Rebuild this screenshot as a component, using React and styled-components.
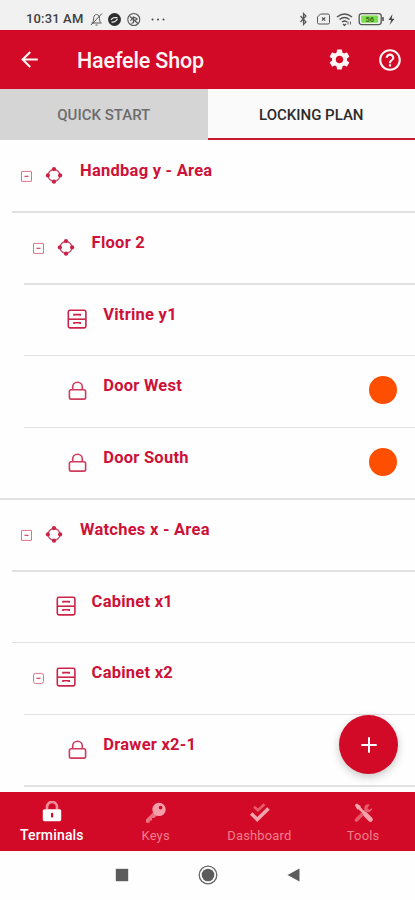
import React from "react";
import styled, { createGlobalStyle } from "styled-components";
import { MdArrowBack, MdSettings, MdHelpOutline } from "react-icons/md";

const ROWS = [
	{ label: "Handbag y - Area", icon: "area", level: 0, open: true, inset: 12 },
	{ label: "Floor 2", icon: "area", level: 1, open: true, inset: 24 },
	{ label: "Vitrine y1", icon: "drawer", level: 2, inset: 24 },
	{ label: "Door West", icon: "lock", level: 2, inset: 24, alert: true },
	{ label: "Door South", icon: "lock", level: 2, inset: 0, alert: true },
	{ label: "Watches x - Area", icon: "area", level: 0, open: true, inset: 12 },
	{ label: "Cabinet x1", icon: "drawer", level: 1, inset: 12 },
	{ label: "Cabinet x2", icon: "drawer", level: 1, open: true, round: true, inset: 24 },
	{ label: "Drawer x2-1", icon: "lock", level: 2, inset: 24 },
];

export default function App() {
	return (
		<Screen>
			<GlobalStyle />
			<StatusBar>
				<Clock>10:31 AM</Clock>
				<StatusLeft />
				<StatusRight />
			</StatusBar>
			<Header>
				<MdArrowBack size={25} />
				<Title>Haefele Shop</Title>
				<MdSettings size={25} />
				<HelpIcon size={26} />
			</Header>
			<Tabs>
				<Tab>QUICK START</Tab>
				<Tab $active>LOCKING PLAN</Tab>
			</Tabs>
			<List>
				{ROWS.map((row) => (
					<Row key={row.label} $level={row.level}>
						<Toggle>{row.open && <ToggleIcon round={row.round} />}</Toggle>
						<IconSlot>{ICONS[row.icon]}</IconSlot>
						<RowLabel>{row.label}</RowLabel>
						{row.alert && <Dot />}
						<Divider $inset={row.inset} />
					</Row>
				))}
				<Fab aria-label="Add">
					<svg width="16" height="16" viewBox="0 0 16 16">
						<path d="M8 0.3v15.4M0.3 8h15.4" stroke="#fff" strokeWidth="2" />
					</svg>
				</Fab>
			</List>
			<BottomNav>
				<NavItem $active>
					<LockSolid />
					<NavLabel $active>Terminals</NavLabel>
				</NavItem>
				<NavItem>
					<KeyIcon />
					<NavLabel>Keys</NavLabel>
				</NavItem>
				<NavItem>
					<DoubleCheck />
					<NavLabel>Dashboard</NavLabel>
				</NavItem>
				<NavItem>
					<ToolsIcon />
					<NavLabel>Tools</NavLabel>
				</NavItem>
			</BottomNav>
			<SystemNav>
				<svg width="14" height="14" viewBox="0 0 14 14">
					<rect x="0.8" y="0.8" width="12.4" height="12.4" fill="#5c5c5c" />
				</svg>
				<svg width="20" height="20" viewBox="0 0 20 20">
					<circle cx="10" cy="10" r="8.8" fill="none" stroke="#686868" strokeWidth="1.3" />
					<circle cx="10" cy="10" r="6.3" fill="#5c5c5c" />
				</svg>
				<svg width="14" height="14" viewBox="0 0 14 14">
					<path d="M0.5 7L12.5 0.4v13.2z" fill="#5c5c5c" />
				</svg>
			</SystemNav>
		</Screen>
	);
}

function StatusLeft() {
	return (
		<svg width="78" height="16" viewBox="0 0 78 16" fill="none" stroke="#555">
			{/* muted bell */}
			<path d="M1.500 12h10M2.500 11.500c1.200-1.200 1-3 1.200-5C4 4.500 5 3.800 6.500 3.500c2 .3 3 1.500 3 4 0 2 .2 3 1.300 4M5.500 14h2M1 14L12 2.500" />
			<circle cx="24.500" cy="8.500" r="6.500" fill="#2e2e2e" stroke="none" />
			<path d="M21 9c2-3 3.500-2.500 6.500-2.200M21.500 11c2 .5 4 0 6-3" stroke="#eee" strokeWidth="1.200" />
			<circle cx="43.800" cy="8.500" r="6" strokeWidth="1.100" />
			<path d="M40 5.500l8 7M40.500 10l3-4 4 2M43.500 6.500v5l-2 1M45 9l2.500-.5" strokeWidth="1.200" />
			<g fill="#444" stroke="none">
				<circle cx="62.500" cy="8.500" r="1" />
				<circle cx="68" cy="8.500" r="1" />
				<circle cx="73.500" cy="8.500" r="1" />
			</g>
		</svg>
	);
}

function StatusRight() {
	return (
		<RightIcons width="100" height="16" viewBox="0 0 100 16" fill="none" stroke="#555">
			<path d="M1.500 5l5.500 6L4.500 13.500V2.500L7 5l-5.500 6" strokeWidth="1.200" />
			{/* missing sim */}
			<path d="M21.500 3h7.500q1.500 0 1.500 1.500v7q0 1.500-1.500 1.500h-9q-1.500 0-1.500-1.500V6z" />
			<path d="M23 6.500l3.200 3.200M26.200 6.500L23 9.700" strokeWidth="1.200" />
			<path d="M38 6q7.500-6 15 0M40.500 8.500q5-4 10 0M43 11q2.500-2 5 0M44 13l1.500 1.300L47 13" strokeWidth="1.400" />
			<path d="M49 10.500v3M51.500 10.500v3" strokeWidth="0.900" />
			<rect x="60.200" y="2.600" width="22" height="11" rx="2.500" strokeWidth="1.300" />
			<path d="M84 6v4" strokeWidth="1.600" />
			<rect x="62.200" y="4.400" width="17" height="7.400" rx="1" fill="#7be04a" stroke="none" />
			<text x="70.700" y="10.800" textAnchor="middle" fontSize="7.500" fontWeight="700" fill="#346a20" stroke="none">
				56
			</text>
			<path d="M93.500 3l-4 6h2.800l-1.800 5 5-6.300h-2.800z" fill="#444" stroke="none" />
		</RightIcons>
	);
}

function ToggleIcon({ round }) {
	return (
		<svg width="12" height="12" viewBox="0 0 12 12" fill="none" stroke="#d3657e">
			<rect x="0.500" y="1.400" width="10" height="10" rx={round ? 2 : 0.300} strokeWidth="0.900" />
			<path d="M3.500 6.300h4" stroke="#cc3355" strokeWidth="1.100" />
		</svg>
	);
}

const ICONS = {
	area: (
		<svg width="18" height="18" viewBox="0 0 18 18" fill="#cb1f45">
			<circle cx="9" cy="9.400" r="5.900" fill="none" stroke="#d04a68" strokeWidth="1.300" />
			<circle cx="9" cy="3.100" r="2.100" />
			<circle cx="9" cy="15.700" r="2.100" />
			<circle cx="2.900" cy="9.400" r="2.100" />
			<circle cx="15.100" cy="9.400" r="2.100" />
		</svg>
	),
	drawer: (
		<svg width="20" height="20" viewBox="0 0 20 20" fill="none" stroke="#cb2449" strokeWidth="1.600">
			<rect x="1.300" y="1.300" width="17.600" height="17.600" rx="1.600" />
			<path d="M1.200 10.200h17.600" />
			<path d="M7 6.800V5.600h6.200v1.200M7 15v-1.200h6.200V15" />
		</svg>
	),
	lock: (
		<svg width="20" height="20" viewBox="0 0 20 20" fill="none" stroke="#d03a5b" strokeWidth="1.600">
			<rect x="2.400" y="9.700" width="16.200" height="9.400" rx="1.700" />
			<path d="M5.700 9.700V7a4.800 4.800 0 0 1 9.600 0v2.700" />
		</svg>
	),
};

function LockSolid() {
	return (
		<svg width="20" height="21" viewBox="0 0 20 21">
			<path d="M5 8.500V6a5 5 0 0 1 10 0v2.500" fill="none" stroke="#f18e9c" strokeWidth="2.600" />
			<rect x="0.800" y="8.200" width="18.400" height="12" rx="1.600" fill="#fff" />
			<rect x="9" y="11.700" width="2.200" height="5" rx="1.100" fill="#d20a27" />
		</svg>
	);
}

function KeyIcon() {
	return (
		<svg width="21" height="21" viewBox="0 0 21 21">
			<path d="M9.500 9L1 17.500V20q0 .7.700.7h3V18.500H7V16h2.300l3-3z" fill="#ea7380" />
			<path
				d="M14 0.700a6.700 6.700 0 1 1 0 13.400a6.700 6.700 0 1 1 0-13.400zM15.600 3.700a1.900 1.900 0 1 0 0 3.800a1.900 1.900 0 1 0 0-3.800z"
				fill="#f3a0a8"
				fillRule="evenodd"
			/>
		</svg>
	);
}

function DoubleCheck() {
	return (
		<svg width="21" height="21" viewBox="0 0 21 21" fill="none">
			<path d="M5 4.700l4 3.600 6.500-6" stroke="#e65c6c" strokeWidth="2.600" />
			<path d="M2.200 11.500l6 6L19.500 6.500" stroke="#f4a5ab" strokeWidth="3.600" />
		</svg>
	);
}

function ToolsIcon() {
	return (
		<svg width="21" height="21" viewBox="0 0 21 21" fill="none">
			<path d="M3.500 18L12 9.500" stroke="#e65c6c" strokeWidth="3.600" strokeLinecap="round" />
			<path d="M16.800 2.500a4 4 0 1 0 2.400 3.300l-2.700 2-2.200-1.500z" fill="#e65c6c" />
			<path d="M3.500 3L12 12" stroke="#f4a5ab" strokeWidth="2.600" />
			<path d="M1.800 3L3.600 1.500l4 2.500v3L4.300 7.500z" fill="#f4a5ab" />
			<path d="M12.500 12.500l5 5" stroke="#f4a5ab" strokeWidth="4.600" strokeLinecap="round" />
		</svg>
	);
}

const GlobalStyle = createGlobalStyle`
	* {
		box-sizing: border-box;
	}

	body {
		margin: 0;
		background: #fefefe;
		font-family: Roboto, "Liberation Sans", sans-serif;
	}

	svg {
		display: block;
		flex-shrink: 0;
	}
`;

const Screen = styled.div`
	width: 415px;
	height: 900px;
	display: flex;
	flex-direction: column;
	overflow: hidden;
`;

const StatusBar = styled.div`
	height: 30px;
	flex-shrink: 0;
	display: flex;
	align-items: center;
	padding: 7px 16px 0 26px;
	background: #f1f1f1;
`;

const Clock = styled.span`
	width: 64px;
	font-size: 13px;
	font-weight: 500;
	letter-spacing: 0.15px;
	color: #3f3f3f;
	white-space: nowrap;
`;

const RightIcons = styled.svg`
	margin-left: auto;
`;

const Header = styled.header`
	height: 59px;
	flex-shrink: 0;
	display: flex;
	align-items: center;
	padding: 0 12px 0 17px;
	background: #d20a27;
	color: #fff5f5;
`;

const Title = styled.h1`
	flex: 1;
	margin: 2px 0 0 35px;
	font-size: 21.5px;
	font-weight: 500;
	letter-spacing: -0.15px;
`;

const HelpIcon = styled(MdHelpOutline)`
	margin-left: 25px;
`;

const Tabs = styled.div`
	height: 51px;
	flex-shrink: 0;
	display: grid;
	grid-template-columns: 1fr 1fr;
`;

const Tab = styled.div`
	display: flex;
	align-items: center;
	justify-content: center;
	padding-top: 3px;
	background: ${(p) => (p.$active ? "#fafafa" : "#d5d5d5")};
	border-bottom: 2px solid ${(p) => (p.$active ? "#c61a30" : "#d5d5d5")};
	color: ${(p) => (p.$active ? "#2b2b2b" : "#6c6c6c")};
	font-size: 15px;
	font-weight: 500;
`;

const List = styled.main`
	position: relative;
	height: 651.5px;
	flex-shrink: 0;
	background: #fefefe;
`;

const Row = styled.div`
	position: relative;
	height: 71.75px;
	display: flex;
	align-items: flex-start;
	padding-left: ${(p) => 21 + p.$level * 11.6}px;
	padding-right: 18px;
`;

const Toggle = styled.div`
	width: 12px;
	height: 72px;
	display: flex;
	align-items: center;
`;

const IconSlot = styled.div`
	width: 22px;
	height: 70px;
	margin-left: 10px;
	display: flex;
	align-items: center;
	justify-content: center;
`;

const RowLabel = styled.span`
	flex: 1;
	margin-left: 15px;
	line-height: 61px;
	font-size: 16.5px;
	font-weight: 700;
	letter-spacing: 0.25px;
	color: #cd1138;
`;

const Dot = styled.span`
	width: 28px;
	height: 28px;
	margin-top: 21px;
	border-radius: 50%;
	background: #fe4e00;
`;

const Divider = styled.div`
	position: absolute;
	left: ${(p) => p.$inset}px;
	right: 0;
	bottom: -1px;
	height: 1.5px;
	background: #e2e0e1;
`;

const Fab = styled.button`
	position: absolute;
	right: 17px;
	bottom: 17.5px;
	width: 59px;
	height: 59px;
	display: flex;
	align-items: center;
	justify-content: center;
	border: 0;
	border-radius: 50%;
	padding: 0;
	background: #d20a27;
	box-shadow: 0 3px 8px rgba(0, 0, 0, 0.22);
`;

const BottomNav = styled.nav`
	height: 59px;
	flex-shrink: 0;
	display: grid;
	grid-template-columns: repeat(4, 1fr);
	background: #d20a27;
`;

const NavItem = styled.div`
	display: flex;
	flex-direction: column;
	align-items: center;
	justify-content: flex-start;
	padding-top: ${(p) => (p.$active ? "9px" : "10px")};
	gap: 5px;
	color: #f3929c;
`;

const NavLabel = styled.span`
	font-size: ${(p) => (p.$active ? "14px" : "13px")};
	line-height: 16px;
	font-weight: ${(p) => (p.$active ? 500 : 400)};
	letter-spacing: 0.15px;
	color: ${(p) => (p.$active ? "#fff" : "#f07f8b")};
`;

const SystemNav = styled.div`
	flex: 1;
	display: flex;
	align-items: center;
	justify-content: center;
	gap: 69px;
	background: #fefefe;
`;
